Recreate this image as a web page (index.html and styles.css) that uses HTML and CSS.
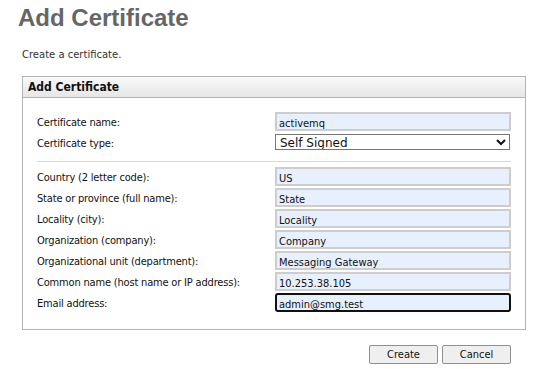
FILE: index.html
```html
<!DOCTYPE html>
<html lang="en">
  <head>
    <meta charset="UTF-8" />
    <title>Add Certificate</title>
    <link rel="stylesheet" href="styles.css">
  </head>

  <body>
    <div class="page">
      <h1 class="title">Add Certificate</h1>
      <div class="intro">Create a certificate.</div>

      <div class="panel">
        <div class="panel-head">Add Certificate</div>

        <div class="panel-body">
          <div class="form">
            <label class="lbl" for="certname">Certificate name:</label>
            <input class="field" id="certname" type="text" value="activemq" />

            <label class="lbl" for="certtype">Certificate type:</label>
            <select class="pick" id="certtype">
              <option>Self Signed</option>
              <option>Certificate Request</option>
            </select>
          </div>

          <div class="sep"></div>

          <div class="form">
            <label class="lbl" for="country">Country (2 letter code):</label>
            <input class="field" id="country" type="text" value="US" />

            <label class="lbl" for="state">State or province (full name):</label>
            <input class="field" id="state" type="text" value="State" />

            <label class="lbl" for="locality">Locality (city):</label>
            <input class="field" id="locality" type="text" value="Locality" />

            <label class="lbl" for="org">Organization (company):</label>
            <input class="field" id="org" type="text" value="Company" />

            <label class="lbl" for="unit">Organizational unit (department):</label>
            <input class="field" id="unit" type="text" value="Messaging Gateway" />

            <label class="lbl" for="cn">Common name (host name or IP address):</label>
            <input class="field" id="cn" type="text" value="10.253.38.105" />

            <label class="lbl" for="email">Email address:</label>
            <input class="field focus" id="email" type="text" value="admin@smg.test" />
          </div>
        </div>
      </div>

      <div class="buttons">
        <button>Create</button>
        <button>Cancel</button>
      </div>
    </div>
  </body>
</html>
```

FILE: styles.css
```css
body {
  margin: 0;
  background-color: white;
  font-family: 'DejaVu Sans', 'Liberation Sans', sans-serif;
  color: #111;
}

.page {
  padding: 0 11px 0 22px;
}

.title {
  margin: 0;
  padding: 4px 0 0 0;
  margin-left: -4px;
  font-family: 'Liberation Sans', Arial, sans-serif;
  font-size: 24px;
  font-weight: 700;
  line-height: 28px;
  color: #666;
}

.intro {
  margin-top: 17px;
  font-size: 10px;
  line-height: 12px;
  color: #333;
}

.panel {
  margin-top: 15px;
  border: 1px solid #b4b4b4;
}

.panel-head {
  height: 20px;
  line-height: 21px;
  padding-left: 5px;
  font-size: 12px;
  font-weight: 700;
  font-stretch: condensed;
  color: #111;
  background: linear-gradient(#f9f9f9, #e6e6e6);
  border-bottom: 1px solid #b4b4b4;
}

.panel-body {
  padding: 14px 14px 17px 14px;
}

.form {
  display: grid;
  grid-template-columns: 238px 1fr;
  row-gap: 2px;
}

.lbl {
  font-size: 11px;
  font-stretch: condensed;
  letter-spacing: -0.18px;
  line-height: 13px;
  padding-top: 4px;
  color: #111;
}

.field {
  box-sizing: border-box;
  height: 19px;
  margin: 0;
  padding: 3px 2px 0 2px;
  border: 2px solid #cdcdcd;
  background-color: #e8f0fe;
  font-family: 'DejaVu Sans', sans-serif;
  font-stretch: condensed;
  font-size: 11px;
  color: #111;
  outline: none;
}

.field.focus {
  border: 2px solid #111;
  border-radius: 3px;
}

.pick {
  box-sizing: border-box;
  height: 16px;
  margin: 1px 1px 0 0;
  padding: 0 0 0 0;
  border: 1px solid #767676;
  border-radius: 0;
  background-color: white;
  font-family: 'DejaVu Sans', sans-serif;
  font-size: 12px;
  color: #111;
}

.sep {
  margin: 11px 0 5px 0;
  border-top: 1px solid #d8d8d8;
}

.buttons {
  display: flex;
  justify-content: flex-end;
  gap: 4px;
  margin: 15px 15px 0 0;
}

.buttons button {
  width: 69px;
  height: 19px;
  padding: 0;
  font-family: 'DejaVu Sans', sans-serif;
  font-stretch: condensed;
  font-size: 11px;
  color: #111;
  background-color: #efefef;
  border: 1px solid #8f8f8f;
  border-radius: 2px;
}
```
